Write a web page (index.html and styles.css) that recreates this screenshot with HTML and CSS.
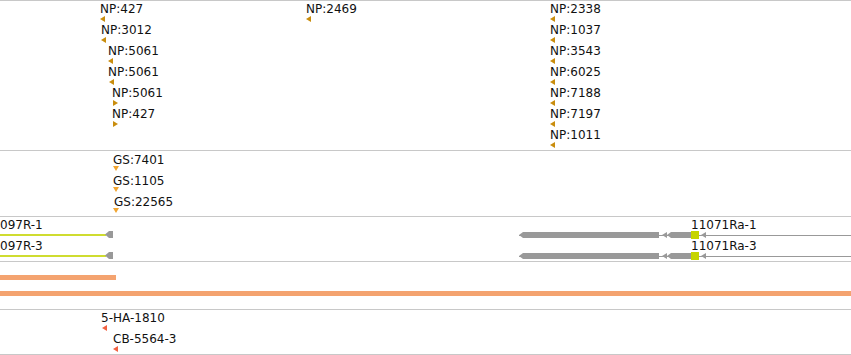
FILE: index.html
```html
<!DOCTYPE html>
<html lang="en">
<head>
  <meta charset="UTF-8" />
  <title>Genome tracks</title>
  <link rel="stylesheet" href="styles.css">
</head>
<body>

<div class="browser">
  <!-- NP features -->
  <div class="track track-np" id="trackNp"></div>
  <!-- GS features -->
  <div class="track track-gs" id="trackGs"></div>
  <!-- transcripts -->
  <div class="track track-genes" id="trackGenes"></div>
  <!-- coverage bars -->
  <div class="track track-bars" id="trackBars"></div>
  <!-- probes -->
  <div class="track track-probes" id="trackProbes"></div>
</div>

<script>
  const ROW = 21;

  function add(track, cls, x, top, w, text) {
    const el = document.createElement("div");
    el.className = cls;
    el.style.left = x + "px";
    el.style.top = top + "px";
    if (w) el.style.width = w + "px";
    if (text) el.textContent = text;
    track.appendChild(el);
  }

  function label(track, text, x, top) { add(track, "label", x, top + 1, 0, text); }
  function tri(track, cls, x, top) { add(track, "tri " + cls, x, top); }
  function box(track, cls, x, top, w) { add(track, cls, x, top, w); }

  // NP: [text, labelX, arrowX, row, direction]
  const np = [
    ["NP:427", 100, 100, 0, "left"],
    ["NP:3012", 101, 101, 1, "left"],
    ["NP:5061", 108, 108, 2, "left"],
    ["NP:5061", 108, 109, 3, "left"],
    ["NP:5061", 112, 113, 4, "right"],
    ["NP:427", 112, 113, 5, "right"],
    ["NP:2469", 306, 306, 0, "left"],
    ["NP:2338", 550, 550, 0, "left"],
    ["NP:1037", 550, 550, 1, "left"],
    ["NP:3543", 550, 550, 2, "left"],
    ["NP:6025", 550, 550, 3, "left"],
    ["NP:7188", 550, 550, 4, "left"],
    ["NP:7197", 550, 550, 5, "left"],
    ["NP:1011", 550, 550, 6, "left"]
  ];
  const trackNp = document.getElementById("trackNp");
  np.forEach(f => {
    label(trackNp, f[0], f[1], f[3] * ROW);
    tri(trackNp, "tri-" + f[4] + " np", f[2], f[3] * ROW + 15);
  });

  const gs = [["GS:7401", 113], ["GS:1105", 113], ["GS:22565", 114]];
  const trackGs = document.getElementById("trackGs");
  gs.forEach((f, i) => {
    label(trackGs, f[0], f[1], i * ROW + 1);
    tri(trackGs, "tri-down gs", 113, i * ROW + 15);
  });

  const trackGenes = document.getElementById("trackGenes");
  ["1", "3"].forEach((n, i) => {
    const y = i * ROW;
    // left transcript (starts off screen)
    label(trackGenes, "097R-" + n, 0, y);
    box(trackGenes, "utr-line", 0, y + 17, 106);
    box(trackGenes, "exon-end", 105, y + 14, 8);
    // right transcript
    label(trackGenes, "11071Ra-" + n, 691, y);
    box(trackGenes, "intron", 519, y + 18, 332);
    box(trackGenes, "exon", 519, y + 15, 140);
    tri(trackGenes, "tri-left gene", 662, y + 15);
    box(trackGenes, "exon", 667, y + 15, 25);
    box(trackGenes, "cds", 691, y + 14, 8);
    tri(trackGenes, "tri-left gene", 701, y + 15);
  });

  const trackBars = document.getElementById("trackBars");
  box(trackBars, "cov", 0, 13, 116);
  box(trackBars, "cov", 0, 29, 851);

  const trackProbes = document.getElementById("trackProbes");
  label(trackProbes, "5-HA-1810", 101, 0);
  tri(trackProbes, "tri-left probe", 102, 15);
  label(trackProbes, "CB-5564-3", 113, ROW);
  tri(trackProbes, "tri-left probe", 113, ROW + 15);
</script>

</body>
</html>
```

FILE: styles.css
```css
body { margin: 0; background: #fff; font-family: "DejaVu Sans", Verdana, sans-serif; font-size: 12px; color: #111; }
.browser { width: 851px; border-top: 1px solid #c8c8c8; overflow: hidden; }
.track { position: relative; border-bottom: 1px solid #c8c8c8; overflow: hidden; }
.track-np { height: 149px; }
.track-gs { height: 65px; }
.track-genes { height: 44px; }
.track-bars { height: 47px; }
.track-probes { height: 44px; }

.label { position: absolute; line-height: 14px; white-space: nowrap; }

/* strand arrows */
.tri { position: absolute; width: 0; height: 0; }
.tri-left { border-top: 3px solid transparent; border-bottom: 3px solid transparent; border-right: 5px solid currentColor; }
.tri-right { border-top: 3px solid transparent; border-bottom: 3px solid transparent; border-left: 5px solid currentColor; }
.tri-down { border-left: 3px solid transparent; border-right: 3px solid transparent; border-top: 5px solid currentColor; }
.np { color: #c98d0d; }
.gs { color: #f2a530; }
.probe { color: #f26242; }
.gene { color: #999; }

/* transcripts */
.utr-line { position: absolute; height: 2px; background: #cfdc30; }
.exon-end { position: absolute; height: 7px; background: #999; clip-path: polygon(0 50%, 4px 0, 100% 0, 100% 100%, 4px 100%); }
.intron { position: absolute; height: 1px; background: #999; }
.exon { position: absolute; height: 6px; background: #999; clip-path: polygon(0 50%, 4px 0, 100% 0, 100% 100%, 4px 100%); }
.cds { position: absolute; height: 8px; background: #c6d400; }

.cov { position: absolute; height: 5px; background: #f4a370; }
```
